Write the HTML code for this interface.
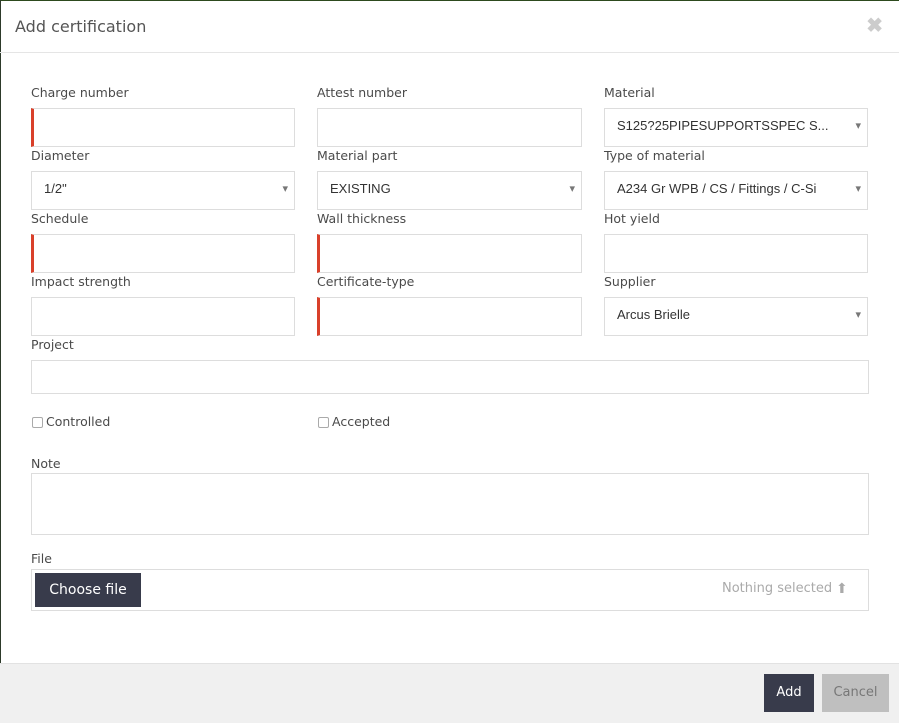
<!DOCTYPE html>
<html><head><style>
*{box-sizing:border-box;margin:0;padding:0}
body{width:899px;height:723px;background:#fff;font-family:"Liberation Sans",sans-serif;position:relative;overflow:hidden}
.a{position:absolute}
.lbl{position:absolute;font-family:"DejaVu Sans","Liberation Sans",sans-serif;font-size:12.5px;color:#4a4a4a}
.in{position:absolute;border:1px solid #ddd;height:39px;background:#fff;font-size:13px;color:#333;padding:0 12px;line-height:34px}
.req{border-left:3px solid #d9402a}
.sel::after{content:"▾";position:absolute;right:6px;top:0;font-size:11px;color:#777}
</style></head><body>
<div class="a" style="left:0;top:0;width:899px;height:1px;background:#2d4a1e"></div>
<div class="a" style="left:0;top:0;width:1px;height:723px;background:#2d3a2a"></div>
<div class="a" style="left:15px;top:17px;font-size:16px;color:#555;font-family:'DejaVu Sans',sans-serif">Add certification</div>
<div class="a" style="right:16px;top:13px;font-size:20px;color:#ccc;font-weight:bold">✖</div>
<div class="a" style="left:0;top:52px;width:899px;height:1px;background:#e5e5e5"></div>

<div class="lbl" style="left:31px;top:85px">Charge number</div>
<div class="lbl" style="left:317px;top:85px">Attest number</div>
<div class="lbl" style="left:604px;top:85px">Material</div>
<div class="in req" style="left:31px;top:108px;width:264px"></div>
<div class="in" style="left:317px;top:108px;width:265px"></div>
<div class="in sel" style="left:604px;top:108px;width:264px">S125?25PIPESUPPORTSSPEC S...</div>

<div class="lbl" style="left:31px;top:148px">Diameter</div>
<div class="lbl" style="left:317px;top:148px">Material part</div>
<div class="lbl" style="left:604px;top:148px">Type of material</div>
<div class="in sel" style="left:31px;top:171px;width:264px">1/2"</div>
<div class="in sel" style="left:317px;top:171px;width:265px">EXISTING</div>
<div class="in sel" style="left:604px;top:171px;width:264px">A234 Gr WPB / CS / Fittings / C-Si</div>

<div class="lbl" style="left:31px;top:211px">Schedule</div>
<div class="lbl" style="left:317px;top:211px">Wall thickness</div>
<div class="lbl" style="left:604px;top:211px">Hot yield</div>
<div class="in req" style="left:31px;top:234px;width:264px"></div>
<div class="in req" style="left:317px;top:234px;width:265px"></div>
<div class="in" style="left:604px;top:234px;width:264px"></div>

<div class="lbl" style="left:31px;top:274px">Impact strength</div>
<div class="lbl" style="left:317px;top:274px">Certificate-type</div>
<div class="lbl" style="left:604px;top:274px">Supplier</div>
<div class="in" style="left:31px;top:297px;width:264px"></div>
<div class="in req" style="left:317px;top:297px;width:265px"></div>
<div class="in sel" style="left:604px;top:297px;width:264px">Arcus Brielle</div>

<div class="lbl" style="left:31px;top:337px">Project</div>
<div class="in" style="left:31px;top:360px;width:838px;height:34px"></div>

<div class="a" style="left:32px;top:417px;width:11px;height:11px;border:1px solid #aaa;border-radius:2px"></div>
<div class="lbl" style="left:46px;top:414px">Controlled</div>
<div class="a" style="left:318px;top:417px;width:11px;height:11px;border:1px solid #aaa;border-radius:2px"></div>
<div class="lbl" style="left:332px;top:414px">Accepted</div>

<div class="lbl" style="left:31px;top:456px">Note</div>
<div class="in" style="left:31px;top:473px;width:838px;height:62px"></div>

<div class="lbl" style="left:31px;top:551px">File</div>
<div class="in" style="left:31px;top:569px;width:838px;height:42px"></div>
<div class="a" style="left:35px;top:573px;width:106px;height:34px;background:#383b4b;color:#fff;font-size:14px;text-align:center;line-height:34px;font-family:'DejaVu Sans',sans-serif">Choose file</div>
<div class="a" style="left:722px;top:581px;font-size:13px;color:#aaa;font-family:'DejaVu Sans',sans-serif">Nothing selected</div>
<div class="a" style="left:836px;top:580px;font-size:14px;color:#aaa">⬆</div>

<div class="a" style="left:0;top:663px;width:899px;height:60px;background:#f0f0f0;border-top:1px solid #e2e2e2"></div>
<div class="a" style="left:764px;top:674px;width:50px;height:38px;background:#383b4b;color:#fff;font-size:13px;text-align:center;line-height:38px;font-family:'DejaVu Sans',sans-serif">Add</div>
<div class="a" style="left:822px;top:674px;width:67px;height:38px;background:#bfbfbf;color:#777;font-size:13px;text-align:center;line-height:38px;font-family:'DejaVu Sans',sans-serif">Cancel</div>
</body></html>
